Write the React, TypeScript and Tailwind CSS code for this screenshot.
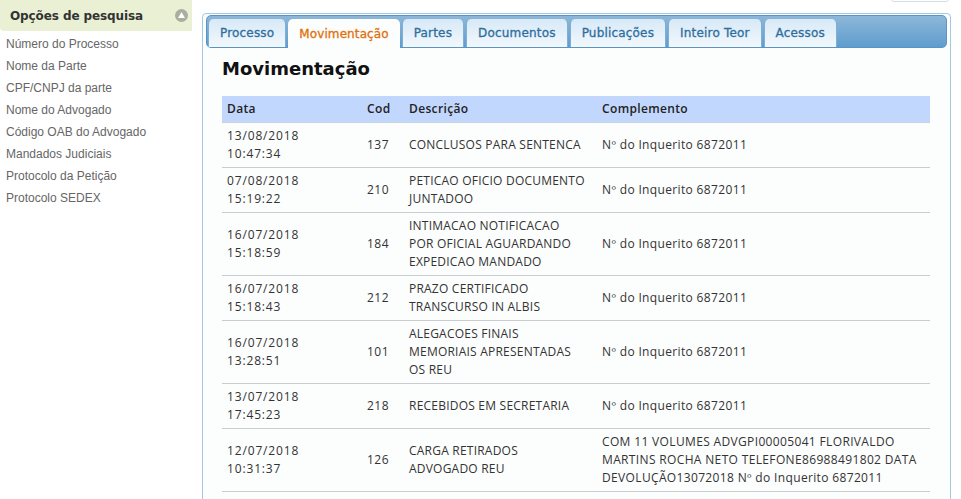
const menu = ["Número do Processo","Nome da Parte","CPF/CNPJ da parte","Nome do Advogado","Código OAB do Advogado","Mandados Judiciais","Protocolo da Petição","Protocolo SEDEX"];
const tabs = ["Processo","Movimentação","Partes","Documentos","Publicações","Inteiro Teor","Acessos"];
const inq = "Nº do Inquerito 6872011";
const rows: [string,string,string,string,string][] = [
  ["13/08/2018","10:47:34","137","CONCLUSOS PARA SENTENCA",inq],
  ["07/08/2018","15:19:22","210","PETICAO OFICIO DOCUMENTO JUNTADOO",inq],
  ["16/07/2018","15:18:59","184","INTIMACAO NOTIFICACAO POR OFICIAL AGUARDANDO EXPEDICAO MANDADO",inq],
  ["16/07/2018","15:18:43","212","PRAZO CERTIFICADO TRANSCURSO IN ALBIS",inq],
  ["16/07/2018","13:28:51","101","ALEGACOES FINAIS MEMORIAIS APRESENTADAS OS REU",inq],
  ["13/07/2018","17:45:23","218","RECEBIDOS EM SECRETARIA",inq],
  ["12/07/2018","10:31:37","126","CARGA RETIRADOS ADVOGADO REU","COM 11 VOLUMES ADVGPI00005041 FLORIVALDO MARTINS ROCHA NETO TELEFONE86988491802 DATA DEVOLUÇÃO13072018 Nº do Inquerito 6872011"],
];
export default function App() {
  return (
    <div className="relative flex h-[499px] w-[961px] overflow-hidden bg-white font-['Liberation_Sans',sans-serif]">
      <div className="absolute right-[12px] top-[-6px] h-[8px] w-[58px] rounded-[3px] border border-[#d5dde3] bg-white" />
      <aside className="w-[192px] shrink-0">
        <div className="flex h-[31px] items-center justify-between rounded-bl-[4px] bg-[#e9f0d3] pl-[10px] pr-[4px] font-['DejaVu_Sans',sans-serif] text-[12px] font-bold tracking-[-0.1px] text-[#333]">
          <span>Opções de pesquisa</span>
          <svg width="13" height="13" viewBox="0 0 13 13"><circle cx="6.5" cy="6.5" r="6.5" fill="#a9aea0"/><path d="M6.5 3 L10 9 H3 Z" fill="#fff"/></svg>
        </div>
        <ul className="pt-[2px] pl-[6px] text-[12px] leading-[22px] text-[#666]">
          {menu.map(m => <li key={m}>{m}</li>)}
        </ul>
      </aside>
      <main className="ml-[10px] mt-[13px] h-[520px] w-[749px] shrink-0 rounded-[4px] border border-[#a6c9e2] bg-[#fcfdfd] px-[3px] pt-[1px]">
        <div className="flex h-[33px] gap-[2px] rounded-[5px] border border-[#5b94c2] bg-gradient-to-b from-[#8db7d8] to-[#5f9dcf] pl-[1px] pt-[3px]">
          {tabs.map(t => {
            const active = t === "Movimentação";
            return (
              <div key={t} className={active
                ? "-mb-[1px] flex items-center rounded-t-[5px] bg-[#fcfdfd] px-[11px] font-['DejaVu_Sans',sans-serif] text-[12px] tracking-[0.1px] text-[#e17009] [-webkit-text-stroke:0.3px]"
                : "flex items-center rounded-t-[5px] border-x border-[#7fb0d4] bg-gradient-to-b from-[#d7e9f7] to-[#f2f8fc] px-[11px] font-['DejaVu_Sans',sans-serif] text-[12px] tracking-[0.18px] text-[#2e6e9e] [-webkit-text-stroke:0.3px]"}>{t}</div>
            );
          })}
        </div>
        <div className="px-[16px]">
          <h1 className="mt-[10px] h-[38px] font-['DejaVu_Sans',sans-serif] text-[18px] font-bold leading-[22px] text-[#111]">Movimentação</h1>
          <table className="w-[708px] table-fixed border-collapse font-['Open_Sans',sans-serif] text-[12px] leading-[18px] tracking-[0.35px] text-[#333]">
            <colgroup><col className="w-[140px]"/><col className="w-[42px]"/><col className="w-[193px]"/><col/></colgroup>
            <thead>
              <tr className="h-[26px] border-b border-[#c9d3e0] bg-[#c2d7fd] text-left text-[#222]">
                <th className="pl-[5px] font-semibold">Data</th><th className="pl-[5px] font-semibold">Cod</th><th className="pl-[5px] font-semibold">Descrição</th><th className="pl-[5px] font-semibold">Complemento</th>
              </tr>
            </thead>
            <tbody>
              {rows.map(r => (
                <tr key={r[0]+r[1]} className="border-b border-[#c8ccd0]">
                  <td className="py-[4px] pl-[5px] align-middle tracking-[0.85px]">{r[0]}<br/>{r[1]}</td>
                  <td className="py-[4px] pl-[5px] align-middle tracking-[0.5px]">{r[2]}</td>
                  <td className="py-[4px] pl-[5px] pr-[12px] align-middle tracking-[0.22px]">{r[3]}</td>
                  <td className="py-[4px] pl-[5px] pr-[6px] align-middle">{r[4]}</td>
                </tr>
              ))}
            </tbody>
          </table>
        </div>
      </main>
    </div>
  );
}
